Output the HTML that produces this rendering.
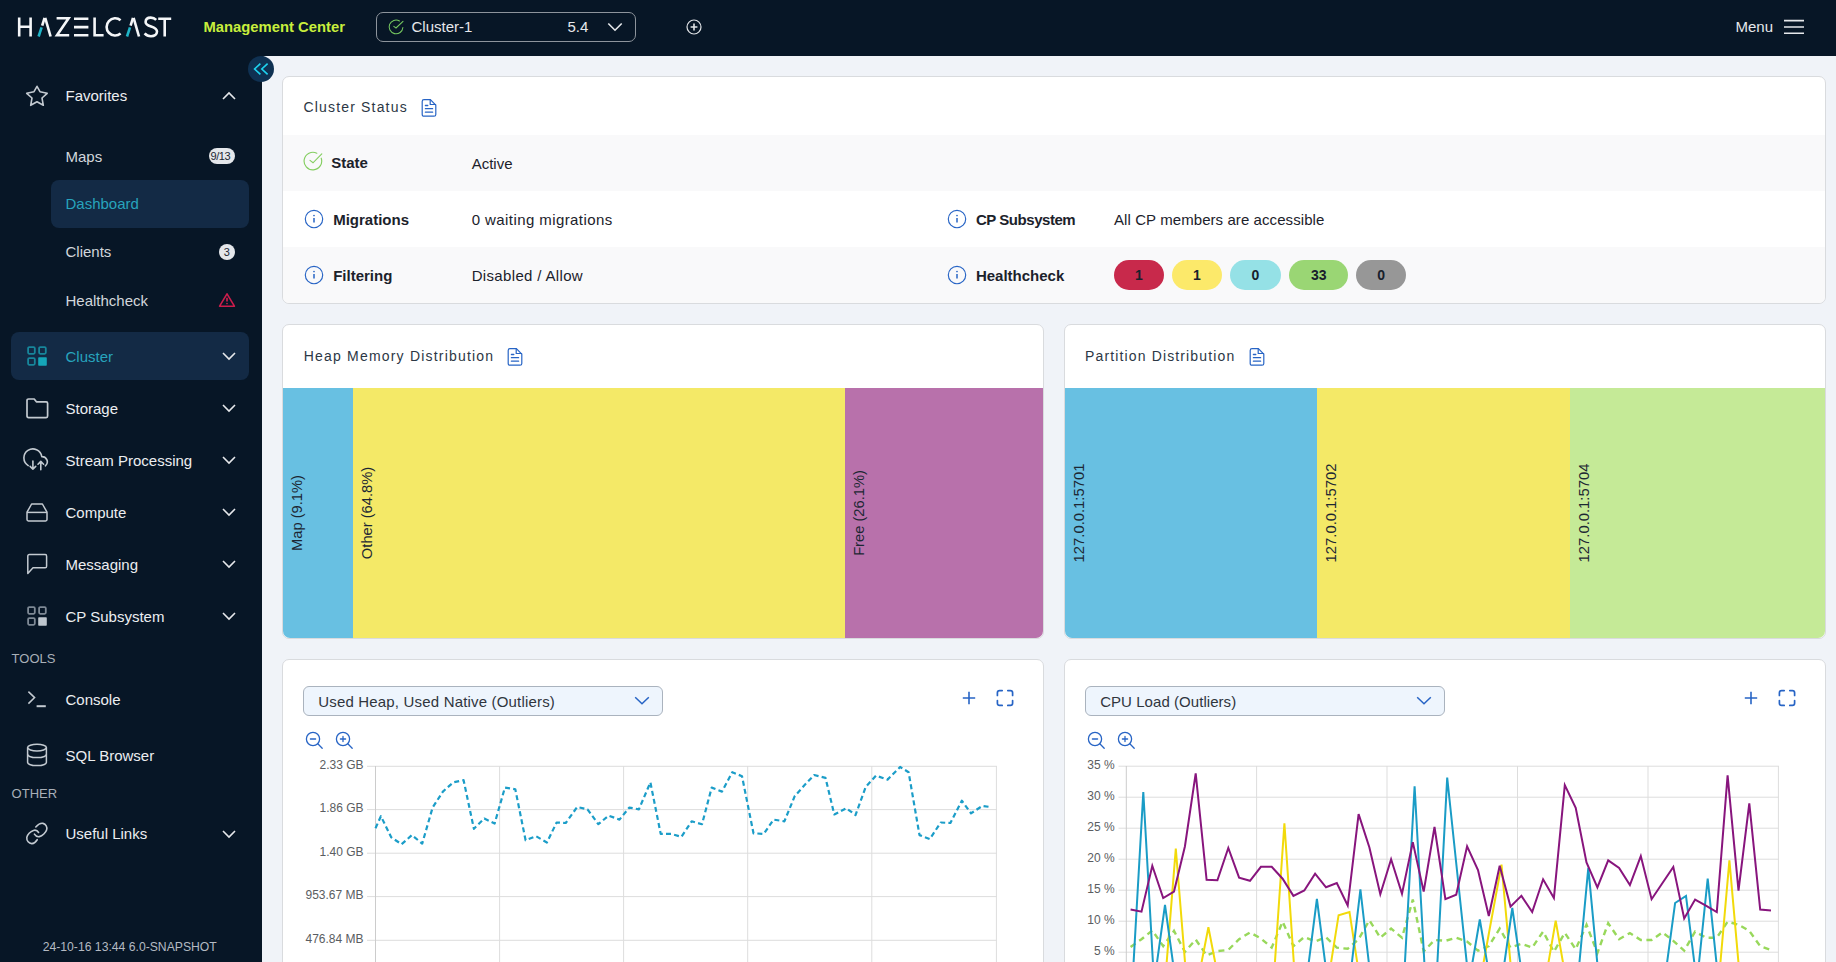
<!DOCTYPE html>
<html><head><meta charset="utf-8">
<style>
*{box-sizing:border-box;margin:0;padding:0}
html,body{width:1836px;height:962px;overflow:hidden;background:#071626;font-family:"Liberation Sans",sans-serif}
.abs{position:absolute}
#hdr{position:absolute;left:0;top:0;width:1836px;height:56px;background:#071626}
#side{position:absolute;left:0;top:56px;width:262px;height:906px;background:#071626}
#main{position:absolute;left:262px;top:56px;width:1574px;height:906px;background:#f0f3f8;border-top-left-radius:4px}
.t{position:absolute;white-space:pre;line-height:1}
.card{position:absolute;background:#fff;border:1px solid #d9dbde;border-radius:7px}
</style></head><body>
<div id="hdr"><svg class="abs" style="left:0;top:0" width="180" height="56" viewBox="0 0 180 56">
<g fill="none" stroke="#f4f6f8" stroke-width="2.6" stroke-linecap="butt">
<path d="M19.2 17.5V36.5M30.6 17.5V36.5M19.2 26.8H30.6"/>
<path d="M45.2 17.8L50.6 36.5"/>
<path d="M56.6 18.3H68.6L57 35.3H69.2"/>
<path d="M74 18.7H88.4M74 27.1H88.4M74 35.3H88.4"/>
<path d="M94.6 17.5V35.3H103.6"/>
<path d="M120.6 20.2A8.6 8.6 0 1 0 120.6 33.6"/>
<path d="M133.6 17.8L139 36.5"/>
<path d="M156.2 19.8C154.6 18.2 152.8 17.6 150.8 17.6C147.6 17.6 145.6 19.4 145.6 21.9C145.6 27.6 157 25.4 157 31.6C157 34.3 154.6 36.2 151 36.2C148.5 36.2 146.2 35.2 144.6 33.4"/>
<path d="M158.2 18.7H171.2M164.7 18.7V36.5"/>
</g>
<g stroke="#1fb5c8" stroke-width="2.6"><path d="M41.6 27.3L38.6 36.5"/><path d="M130 27.3L127 36.5"/></g>
<g stroke="#f4f6f8" stroke-width="2.6"><path d="M44.6 17.8L42.2 25.6"/><path d="M133 17.8L130.6 25.6"/></g>
</svg><div class="t" style="left:203.5px;top:20.17px;font-size:14.8px;font-weight:bold;color:#c8ee3c;">Management Center</div>
<div class="abs" style="left:376px;top:12px;width:260px;height:30px;border:1px solid #8d949c;border-radius:7px"></div><svg class="abs" style="left:386px;top:17px" width="20" height="20" viewBox="0 0 20 20"><g fill="none" stroke="#76c860" stroke-width="1.05" stroke-linecap="round"><path d="M16.9 10.5A6.9 6.9 0 1 1 13.45 3.92"/><path d="M7.8 9.4L10 11L17 4.3"/></g></svg><div class="t" style="left:411.5px;top:19.30px;font-size:15px;color:#e6e8eb;">Cluster-1</div>
<div class="t" style="left:567.5px;top:19.30px;font-size:15px;color:#e6e8eb;">5.4</div>
<svg class="abs" style="left:606px;top:20px" width="18" height="14" viewBox="0 0 18 14"><path d="M2.3 3.5L9 10.2L15.7 3.5" fill="none" stroke="#e6e8eb" stroke-width="1.6"/></svg><svg class="abs" style="left:684px;top:17px" width="20" height="20" viewBox="0 0 20 20"><g fill="none" stroke="#e0e3e6" stroke-width="1.2"><circle cx="10" cy="10" r="7"/><path d="M10 6.6V13.4M6.6 10H13.4" stroke-width="1.6"/></g></svg><div class="t" style="left:1735.5px;top:19.40px;font-size:15px;color:#e6e8eb;">Menu</div>
<svg class="abs" style="left:1782px;top:17px" width="24" height="20" viewBox="0 0 24 20"><g stroke="#e6e8eb" stroke-width="1.6"><path d="M2 3.6H22M2 10H22M2 16.2H22"/></g></svg></div><div id="side"></div><div class="abs" style="left:51px;top:180px;width:198px;height:48px;background:#132a45;border-radius:8px"></div><div class="abs" style="left:11px;top:332px;width:238px;height:48px;background:#132a45;border-radius:8px"></div><div class="t" style="left:65.5px;top:88.30px;font-size:15px;color:#eceef1;">Favorites</div>
<div class="t" style="left:65.5px;top:148.60px;font-size:15px;color:#d2d6dc;">Maps</div>
<div class="t" style="left:65.5px;top:196.30px;font-size:15px;color:#27a4bd;">Dashboard</div>
<div class="t" style="left:65.5px;top:244.40px;font-size:15px;color:#d2d6dc;">Clients</div>
<div class="t" style="left:65.5px;top:292.50px;font-size:15px;color:#d2d6dc;">Healthcheck</div>
<div class="t" style="left:65.5px;top:348.80px;font-size:15px;color:#27a4bd;">Cluster</div>
<div class="t" style="left:65.5px;top:400.60px;font-size:15px;color:#eceef1;">Storage</div>
<div class="t" style="left:65.5px;top:452.50px;font-size:15px;color:#eceef1;">Stream Processing</div>
<div class="t" style="left:65.5px;top:504.60px;font-size:15px;color:#eceef1;">Compute</div>
<div class="t" style="left:65.5px;top:556.80px;font-size:15px;color:#eceef1;">Messaging</div>
<div class="t" style="left:65.5px;top:608.80px;font-size:15px;color:#eceef1;">CP Subsystem</div>
<div class="t" style="left:11.6px;top:651.99px;font-size:13px;color:#a9b0b8;">TOOLS</div>
<div class="t" style="left:65.5px;top:691.80px;font-size:15px;color:#eceef1;">Console</div>
<div class="t" style="left:65.5px;top:747.70px;font-size:15px;color:#eceef1;">SQL Browser</div>
<div class="t" style="left:11.6px;top:786.99px;font-size:13px;color:#a9b0b8;">OTHER</div>
<div class="t" style="left:65.5px;top:826.20px;font-size:15px;color:#eceef1;">Useful Links</div>
<div class="t" style="left:42.7px;top:940.67px;font-size:12.2px;color:#b4bac2;">24-10-16 13:44 6.0-SNAPSHOT</div>
<div class="abs" style="left:209px;top:148px;width:26px;height:16px;border-radius:8px;background:#e4e7eb"></div><div class="t" style="left:210.5px;top:150.69px;font-size:11px;color:#1d2733;letter-spacing:-0.4px">9/13</div>
<div class="abs" style="left:219px;top:244px;width:16px;height:16px;border-radius:8px;background:#e4e7eb"></div><div class="t" style="left:223.7px;top:246.69px;font-size:11px;color:#1d2733;">3</div>
<svg class="abs" style="left:217px;top:290px" width="20" height="20" viewBox="0 0 20 20"><g fill="none" stroke="#cc1d4c" stroke-width="1.6" stroke-linejoin="round"><path d="M10 3.8L17.4 16.2H2.6Z"/></g><path d="M10 7.8V11.4" stroke="#cc1d4c" stroke-width="1.7"/><circle cx="10" cy="13.5" r="0.85" fill="#cc1d4c"/></svg><svg class="abs" style="left:221px;top:90px" width="16" height="12" viewBox="0 0 16 12"><path d="M2 9L8 3L14 9" fill="none" stroke="#e6e8eb" stroke-width="1.6"/></svg>
<svg class="abs" style="left:221px;top:350px" width="16" height="12" viewBox="0 0 16 12"><path d="M2 3L8 9L14 3" fill="none" stroke="#e6e8eb" stroke-width="1.6"/></svg>
<svg class="abs" style="left:221px;top:402px" width="16" height="12" viewBox="0 0 16 12"><path d="M2 3L8 9L14 3" fill="none" stroke="#e6e8eb" stroke-width="1.6"/></svg>
<svg class="abs" style="left:221px;top:454px" width="16" height="12" viewBox="0 0 16 12"><path d="M2 3L8 9L14 3" fill="none" stroke="#e6e8eb" stroke-width="1.6"/></svg>
<svg class="abs" style="left:221px;top:506px" width="16" height="12" viewBox="0 0 16 12"><path d="M2 3L8 9L14 3" fill="none" stroke="#e6e8eb" stroke-width="1.6"/></svg>
<svg class="abs" style="left:221px;top:558px" width="16" height="12" viewBox="0 0 16 12"><path d="M2 3L8 9L14 3" fill="none" stroke="#e6e8eb" stroke-width="1.6"/></svg>
<svg class="abs" style="left:221px;top:610px" width="16" height="12" viewBox="0 0 16 12"><path d="M2 3L8 9L14 3" fill="none" stroke="#e6e8eb" stroke-width="1.6"/></svg>
<svg class="abs" style="left:221px;top:828px" width="16" height="12" viewBox="0 0 16 12"><path d="M2 3L8 9L14 3" fill="none" stroke="#e6e8eb" stroke-width="1.6"/></svg>
<svg class="abs" style="left:24px;top:83px" width="26" height="26" viewBox="0 0 26 26"><path d="M13 3.3L16 8.7L23.2 10.3L18 15L19.3 22.3L13 18.7L6.7 22.3L8 15L2.7 10.3L10 8.7Z" fill="none" stroke="#c3cad1" stroke-width="1.6" stroke-linejoin="round"/></svg><svg class="abs" style="left:27px;top:346.2px" width="20" height="20" viewBox="0 0 20 20"><g fill="none" stroke="#17869b" stroke-width="1.8"><rect x="1.1" y="1.1" width="6.7" height="6.7" rx="1.2"/><rect x="12.1" y="1.1" width="6.7" height="6.7" rx="1.2"/><rect x="1.1" y="12.1" width="6.7" height="6.7" rx="1.2"/></g><rect x="11.2" y="11.2" width="8.6" height="8.6" rx="0.8" fill="#15a5b8"/></svg>
<svg class="abs" style="left:27px;top:606.2px" width="20" height="20" viewBox="0 0 20 20"><g fill="none" stroke="#7e8995" stroke-width="1.8"><rect x="1.1" y="1.1" width="6.7" height="6.7" rx="1.2"/><rect x="12.1" y="1.1" width="6.7" height="6.7" rx="1.2"/><rect x="1.1" y="12.1" width="6.7" height="6.7" rx="1.2"/></g><rect x="11.2" y="11.2" width="8.6" height="8.6" rx="0.8" fill="#bec6ce"/></svg>
<svg class="abs" style="left:24px;top:396px" width="26" height="24" viewBox="0 0 26 24"><path d="M3 4.6C3 3.5 3.5 3 4.6 3H10.2L12.4 5.8H22.2C23.2 5.8 23.6 6.3 23.6 7.2V20C23.6 21 23.2 21.6 22.2 21.6H4.6C3.5 21.6 3 21 3 20Z" fill="none" stroke="#c3cad1" stroke-width="1.7" stroke-linejoin="round"/></svg><svg class="abs" style="left:23px;top:448px" width="28" height="24" viewBox="0 0 28 24"><g fill="none" stroke="#c3cad1" stroke-width="1.6" stroke-linecap="round" stroke-linejoin="round"><path d="M5.2 17.6A9 9 0 1 1 18.8 8.6A5.2 5.2 0 0 1 22.4 17.8"/><path d="M9.9 13V21.2M7.1 18.4L9.9 21.2L12.7 18.4"/><path d="M17.8 21.7V13.4M15 16.2L17.8 13.4L20.6 16.2"/></g></svg><svg class="abs" style="left:24px;top:501px" width="26" height="22" viewBox="0 0 26 22"><g fill="none" stroke="#c3cad1" stroke-width="1.5" stroke-linejoin="round"><path d="M3 11.2L7.6 3H18.4L23 11.2V18.6C23 19.6 22.5 20 21.6 20H4.4C3.5 20 3 19.6 3 18.6Z"/><path d="M3 11.4H23"/></g></svg><svg class="abs" style="left:25px;top:552px" width="24" height="24" viewBox="0 0 24 24"><path d="M2.8 21.4V4.2C2.8 3.2 3.3 2.6 4.4 2.6H20.2C21.2 2.6 21.6 3.2 21.6 4.2V14.2C21.6 15.2 21.2 15.8 20.2 15.8H8L2.8 21.4Z" fill="none" stroke="#c3cad1" stroke-width="1.5" stroke-linejoin="round"/></svg><svg class="abs" style="left:26px;top:689px" width="22" height="20" viewBox="0 0 22 20"><g fill="none" stroke="#c3cad1" stroke-width="1.5"><path d="M2.4 2.6L8.6 8.6L2.4 14.6"/><path d="M10.6 17.2H19.8" stroke-width="2"/></g></svg><svg class="abs" style="left:25px;top:742px" width="24" height="26" viewBox="0 0 24 26"><g fill="none" stroke="#c3cad1" stroke-width="1.5"><ellipse cx="12" cy="5.6" rx="9.4" ry="3.4"/><path d="M2.6 5.6V20.2C2.6 22.2 6.8 23.6 12 23.6C17.2 23.6 21.4 22.2 21.4 20.2V5.6"/><path d="M2.6 12.2C2.6 14.2 6.8 15.6 12 15.6C17.2 15.6 21.4 14.2 21.4 12.2"/></g></svg><svg class="abs" style="left:24px;top:821px" width="26" height="26" viewBox="0 0 26 26"><g fill="none" stroke="#c3cad1" stroke-width="1.6" stroke-linecap="round"><path d="M11.8 6C13.8 3.8 16.2 1.8 19 2.4C21.8 3 23.6 6 22.6 9C21.8 11.4 18.4 15 15.4 15.6C13.4 16 11.4 14.8 10.4 13.2"/><path d="M14.6 11.5C13.6 9.8 11.6 8.8 9.4 9.4C6.4 10.4 3.2 13.6 2.8 16.4C2.4 19.8 5 22.8 8 22.6C10.2 22.4 12 20.6 13.2 18.7"/></g></svg><div id="main"></div><div class="abs" style="left:248px;top:56px;width:26px;height:26px;border-radius:13px;background:#0f3152"></div><svg class="abs" style="left:248px;top:56px" width="26" height="26" viewBox="0 0 26 26"><g fill="none" stroke="#1ed3f0" stroke-width="1.6"><path d="M12.4 7.6L6.6 13L12.4 18.4"/><path d="M19.6 7.6L13.8 13L19.6 18.4"/></g></svg><div class="card" style="left:282px;top:76px;width:1544px;height:228px"></div><div class="abs" style="left:283px;top:134.5px;width:1542px;height:56.5px;background:#f9f9fa"></div><div class="abs" style="left:283px;top:247px;width:1542px;height:56px;background:#f9f9fa;border-bottom-left-radius:7px;border-bottom-right-radius:7px"></div><div class="t" style="left:303.5px;top:100.05px;font-size:14px;color:#2c3745;letter-spacing:1.17px">Cluster Status</div>
<svg class="abs" style="left:421px;top:98px" width="17" height="20" viewBox="0 0 17 20"><g fill="none" stroke="#2764c5" stroke-width="1.2" stroke-linejoin="round" stroke-linecap="round"><path d="M3 1.6H9.4L14.8 7.2V16.4C14.8 17.6 14.2 18.2 13 18.2H3C1.8 18.2 1.2 17.6 1.2 16.4V3.4C1.2 2.2 1.8 1.6 3 1.6Z"/><path d="M9.2 1.8V6.5H14.6"/><path d="M4.4 7.5H6.8M4.4 10.7H11.6M4.4 14.2H11.6" stroke-width="1.3"/></g></svg>
<svg class="abs" style="left:303px;top:151px" width="20" height="20" viewBox="0 0 20 20"><g fill="none" stroke="#84ce60" stroke-width="1.15" stroke-linecap="round"><path d="M18.2 7.2A8.8 8.8 0 1 1 13.8 2.2"/><path d="M7 9.4L10 11.8L18.8 2.8"/></g></svg><div class="t" style="left:331.2px;top:155.30px;font-size:15px;font-weight:bold;color:#1c222b;">State</div>
<div class="t" style="left:471.7px;top:156.00px;font-size:15px;color:#1c222b;">Active</div>
<svg class="abs" style="left:304px;top:209px" width="20" height="20" viewBox="0 0 20 20"><circle cx="10" cy="10" r="8.7" fill="none" stroke="#2764c5" stroke-width="1.15"/><circle cx="10" cy="6.5" r="0.85" fill="#2764c5"/><path d="M10 8.9V13.4" stroke="#2764c5" stroke-width="1.5"/></svg>
<div class="t" style="left:333.2px;top:211.80px;font-size:15px;font-weight:bold;color:#1c222b;">Migrations</div>
<div class="t" style="left:471.7px;top:211.80px;font-size:15px;color:#1c222b;letter-spacing:0.42px">0 waiting migrations</div>
<svg class="abs" style="left:304px;top:265px" width="20" height="20" viewBox="0 0 20 20"><circle cx="10" cy="10" r="8.7" fill="none" stroke="#2764c5" stroke-width="1.15"/><circle cx="10" cy="6.5" r="0.85" fill="#2764c5"/><path d="M10 8.9V13.4" stroke="#2764c5" stroke-width="1.5"/></svg>
<div class="t" style="left:333.2px;top:267.80px;font-size:15px;font-weight:bold;color:#1c222b;">Filtering</div>
<div class="t" style="left:471.7px;top:267.80px;font-size:15px;color:#1c222b;letter-spacing:0.34px">Disabled / Allow</div>
<svg class="abs" style="left:947px;top:209px" width="20" height="20" viewBox="0 0 20 20"><circle cx="10" cy="10" r="8.7" fill="none" stroke="#2764c5" stroke-width="1.15"/><circle cx="10" cy="6.5" r="0.85" fill="#2764c5"/><path d="M10 8.9V13.4" stroke="#2764c5" stroke-width="1.5"/></svg>
<div class="t" style="left:975.9px;top:211.80px;font-size:15px;font-weight:bold;color:#1c222b;letter-spacing:-0.45px">CP Subsystem</div>
<div class="t" style="left:1114px;top:211.80px;font-size:15px;color:#1c222b;letter-spacing:0.08px">All CP members are accessible</div>
<svg class="abs" style="left:947px;top:265px" width="20" height="20" viewBox="0 0 20 20"><circle cx="10" cy="10" r="8.7" fill="none" stroke="#2764c5" stroke-width="1.15"/><circle cx="10" cy="6.5" r="0.85" fill="#2764c5"/><path d="M10 8.9V13.4" stroke="#2764c5" stroke-width="1.5"/></svg>
<div class="t" style="left:975.9px;top:267.80px;font-size:15px;font-weight:bold;color:#1c222b;">Healthcheck</div>
<div class="abs" style="left:1114px;top:260px;width:50px;height:30px;border-radius:15px;background:#c8294b;color:#18202b;font-size:14px;font-weight:bold;text-align:center;line-height:30px">1</div><div class="abs" style="left:1172px;top:260px;width:50px;height:30px;border-radius:15px;background:#fce96a;color:#18202b;font-size:14px;font-weight:bold;text-align:center;line-height:30px">1</div><div class="abs" style="left:1230px;top:260px;width:51px;height:30px;border-radius:15px;background:#95e1e6;color:#18202b;font-size:14px;font-weight:bold;text-align:center;line-height:30px">0</div><div class="abs" style="left:1289px;top:260px;width:59.4px;height:30px;border-radius:15px;background:#9ad674;color:#18202b;font-size:14px;font-weight:bold;text-align:center;line-height:30px">33</div><div class="abs" style="left:1356.2px;top:260px;width:50px;height:30px;border-radius:15px;background:#979797;color:#18202b;font-size:14px;font-weight:bold;text-align:center;line-height:30px">0</div><div class="card" style="left:282px;top:324px;width:762px;height:315px"></div><div class="t" style="left:303.7px;top:349.05px;font-size:14px;color:#2c3745;letter-spacing:1.2px">Heap Memory Distribution</div>
<svg class="abs" style="left:507.4px;top:346.6px" width="17" height="20" viewBox="0 0 17 20"><g fill="none" stroke="#2764c5" stroke-width="1.2" stroke-linejoin="round" stroke-linecap="round"><path d="M3 1.6H9.4L14.8 7.2V16.4C14.8 17.6 14.2 18.2 13 18.2H3C1.8 18.2 1.2 17.6 1.2 16.4V3.4C1.2 2.2 1.8 1.6 3 1.6Z"/><path d="M9.2 1.8V6.5H14.6"/><path d="M4.4 7.5H6.8M4.4 10.7H11.6M4.4 14.2H11.6" stroke-width="1.3"/></g></svg>
<div class="abs" style="left:283px;top:388px;width:70px;height:250px;background:#68c0e2;border-bottom-left-radius:7px;"></div>
<div class="abs" style="left:353px;top:388px;width:492px;height:250px;background:#f4e967;"></div>
<div class="abs" style="left:845px;top:388px;width:198px;height:250px;background:#b871ab;border-bottom-right-radius:7px;"></div>
<div class="t" style="left:289.85px;top:638.00px;width:250px;text-align:center;font-size:14.7px;color:#1c2733;transform-origin:0 0;transform:rotate(-90deg)">Map (9.1%)</div>
<div class="t" style="left:359.85px;top:638.00px;width:250px;text-align:center;font-size:14.7px;color:#1c2733;transform-origin:0 0;transform:rotate(-90deg)">Other (64.8%)</div>
<div class="t" style="left:851.85px;top:638.00px;width:250px;text-align:center;font-size:14.7px;color:#1c2733;transform-origin:0 0;transform:rotate(-90deg)">Free (26.1%)</div>
<div class="card" style="left:1064px;top:324px;width:762px;height:315px"></div><div class="t" style="left:1085px;top:349.05px;font-size:14px;color:#2c3745;letter-spacing:1.14px">Partition Distribution</div>
<svg class="abs" style="left:1249px;top:347px" width="17" height="20" viewBox="0 0 17 20"><g fill="none" stroke="#2764c5" stroke-width="1.2" stroke-linejoin="round" stroke-linecap="round"><path d="M3 1.6H9.4L14.8 7.2V16.4C14.8 17.6 14.2 18.2 13 18.2H3C1.8 18.2 1.2 17.6 1.2 16.4V3.4C1.2 2.2 1.8 1.6 3 1.6Z"/><path d="M9.2 1.8V6.5H14.6"/><path d="M4.4 7.5H6.8M4.4 10.7H11.6M4.4 14.2H11.6" stroke-width="1.3"/></g></svg>
<div class="abs" style="left:1065px;top:388px;width:252px;height:250px;background:#68c0e2;border-bottom-left-radius:7px;"></div>
<div class="abs" style="left:1317px;top:388px;width:253px;height:250px;background:#f4e967;"></div>
<div class="abs" style="left:1570px;top:388px;width:255px;height:250px;background:#c5ea97;border-bottom-right-radius:7px;"></div>
<div class="t" style="left:1071.77px;top:638.00px;width:250px;text-align:center;font-size:14.8px;color:#1c2733;transform-origin:0 0;transform:rotate(-90deg)">127.0.0.1:5701</div>
<div class="t" style="left:1323.77px;top:638.00px;width:250px;text-align:center;font-size:14.8px;color:#1c2733;transform-origin:0 0;transform:rotate(-90deg)">127.0.0.1:5702</div>
<div class="t" style="left:1576.77px;top:638.00px;width:250px;text-align:center;font-size:14.8px;color:#1c2733;transform-origin:0 0;transform:rotate(-90deg)">127.0.0.1:5704</div>
<div class="card" style="left:282px;top:659px;width:762px;height:340px"></div>
<div class="card" style="left:1064px;top:659px;width:762px;height:340px"></div>
<div class="abs" style="left:303px;top:686px;width:360px;height:30px;border:1px solid #aab3be;border-radius:6px;background:#eef5fd"></div>
<div class="t" style="left:318.2px;top:693.50px;font-size:15px;color:#30353d;letter-spacing:0.18px">Used Heap, Used Native (Outliers)</div>
<svg class="abs" style="left:633px;top:692px" width="18" height="18" viewBox="0 0 18 18"><path d="M2.2 5.2L9 11.8L15.8 5.2" fill="none" stroke="#2764c5" stroke-width="1.5"/></svg>
<div class="abs" style="left:1085px;top:686px;width:360px;height:30px;border:1px solid #aab3be;border-radius:6px;background:#eef5fd"></div>
<div class="t" style="left:1100.2px;top:693.50px;font-size:15px;color:#30353d;letter-spacing:0.05px">CPU Load (Outliers)</div>
<svg class="abs" style="left:1415px;top:692px" width="18" height="18" viewBox="0 0 18 18"><path d="M2.2 5.2L9 11.8L15.8 5.2" fill="none" stroke="#2764c5" stroke-width="1.5"/></svg>
<svg class="abs" style="left:961px;top:690px" width="16" height="16" viewBox="0 0 16 16"><path d="M8 1.8V14.2M1.8 8H14.2" stroke="#2764c5" stroke-width="1.6"/></svg>
<svg class="abs" style="left:995.5px;top:689px" width="18" height="18" viewBox="0 0 18 18"><g fill="none" stroke="#2764c5" stroke-width="1.7" stroke-linecap="round"><path d="M1.4 6.4V3.8C1.4 2.4 2.2 1.6 3.6 1.6H6.2"/><path d="M11.8 1.6H14.4C15.8 1.6 16.6 2.4 16.6 3.8V6.4"/><path d="M16.6 11.6V14.2C16.6 15.6 15.8 16.4 14.4 16.4H11.8"/><path d="M6.2 16.4H3.6C2.2 16.4 1.4 15.6 1.4 14.2V11.6"/></g></svg>
<svg class="abs" style="left:304.5px;top:731px" width="20" height="20" viewBox="0 0 20 20"><g fill="none" stroke="#2764c5" stroke-width="1.3" stroke-linecap="round"><circle cx="8" cy="8" r="6.6"/><path d="M12.8 12.8L17.2 17.2"/><path d="M5.4 8H10.6" /></g></svg>
<svg class="abs" style="left:334.5px;top:731px" width="20" height="20" viewBox="0 0 20 20"><g fill="none" stroke="#2764c5" stroke-width="1.3" stroke-linecap="round"><circle cx="8" cy="8" r="6.6"/><path d="M12.8 12.8L17.2 17.2"/><path d="M5.4 8H10.6M8 5.4V10.6"/></g></svg>
<svg class="abs" style="left:1743px;top:690px" width="16" height="16" viewBox="0 0 16 16"><path d="M8 1.8V14.2M1.8 8H14.2" stroke="#2764c5" stroke-width="1.6"/></svg>
<svg class="abs" style="left:1777.5px;top:689px" width="18" height="18" viewBox="0 0 18 18"><g fill="none" stroke="#2764c5" stroke-width="1.7" stroke-linecap="round"><path d="M1.4 6.4V3.8C1.4 2.4 2.2 1.6 3.6 1.6H6.2"/><path d="M11.8 1.6H14.4C15.8 1.6 16.6 2.4 16.6 3.8V6.4"/><path d="M16.6 11.6V14.2C16.6 15.6 15.8 16.4 14.4 16.4H11.8"/><path d="M6.2 16.4H3.6C2.2 16.4 1.4 15.6 1.4 14.2V11.6"/></g></svg>
<svg class="abs" style="left:1086.5px;top:731px" width="20" height="20" viewBox="0 0 20 20"><g fill="none" stroke="#2764c5" stroke-width="1.3" stroke-linecap="round"><circle cx="8" cy="8" r="6.6"/><path d="M12.8 12.8L17.2 17.2"/><path d="M5.4 8H10.6" /></g></svg>
<svg class="abs" style="left:1116.5px;top:731px" width="20" height="20" viewBox="0 0 20 20"><g fill="none" stroke="#2764c5" stroke-width="1.3" stroke-linecap="round"><circle cx="8" cy="8" r="6.6"/><path d="M12.8 12.8L17.2 17.2"/><path d="M5.4 8H10.6M8 5.4V10.6"/></g></svg>
<svg class="abs" style="left:0;top:0" width="1836" height="962" viewBox="0 0 1836 962"><g stroke="#dddddd" stroke-width="1" fill="none"><path d="M367 766.3H996.9"/><path d="M367 809.6H996.9"/><path d="M367 853.2H996.9"/><path d="M367 896.6H996.9"/><path d="M367 940.3H996.9"/><path d="M499.6 766V962"/><path d="M623.6 766V962"/><path d="M747.7 766V962"/><path d="M871.8 766V962"/><path d="M996.4 766V962"/><path d="M375.5 766V962" stroke="#cccccc"/><path d="M1118.5 766.2H1778.9"/><path d="M1118.5 797.2H1778.9"/><path d="M1118.5 828.2H1778.9"/><path d="M1118.5 859.2H1778.9"/><path d="M1118.5 890.2H1778.9"/><path d="M1118.5 921.2H1778.9"/><path d="M1118.5 952.2H1778.9"/><path d="M1256.6 766V962"/><path d="M1387.0 766V962"/><path d="M1517.5 766V962"/><path d="M1648.0 766V962"/><path d="M1778.4 766V962"/><path d="M1126.3 766V962" stroke="#cccccc"/></g><path d="M375.5 828.2 L380.9 816.2 L391.2 837.3 L401.6 844.2 L411.9 835.1 L422.2 843.6 L432.6 807.6 L442.9 791.6 L453.2 782.4 L463.6 780.2 L473.9 828.8 L484.3 818.5 L494.6 823.6 L504.9 787.6 L515.3 789.3 L525.6 840.2 L536.0 836.2 L546.9 842.5 L556.6 822.5 L565.7 823.0 L577.2 807.0 L587.5 809.3 L598.3 824.2 L608.6 815.6 L619.5 819.6 L629.2 807.6 L638.9 809.3 L650.4 782.4 L660.7 833.9 L671.0 833.9 L681.4 836.8 L691.7 821.3 L702.0 824.2 L711.7 787.6 L722.0 791.6 L732.3 772.2 L742.0 776.2 L753.5 833.3 L763.8 833.9 L773.5 819.6 L784.4 821.3 L794.7 796.2 L804.4 785.3 L814.1 775.0 L825.5 777.9 L834.3 814.5 L846.3 808.2 L855.5 815.0 L865.7 787.0 L876.0 775.6 L887.5 779.6 L900.1 767.0 L908.6 772.2 L919.5 835.1 L929.8 839.1 L940.7 822.5 L950.4 823.0 L961.8 800.7 L971.0 813.3 L982.4 805.9 L990.4 807.0" fill="none" stroke="#1b9dc8" stroke-width="2.2" stroke-dasharray="5 3.2" stroke-linejoin="round"/><path d="M1130.6 946.9 L1141.5 939.2 L1152.3 930.5 L1163.2 946.1 L1174.0 930.9 L1184.9 951.8 L1195.7 939.6 L1206.6 955.3 L1217.4 951.1 L1228.3 949.9 L1239.1 939.2 L1250.0 932.4 L1260.9 938.5 L1271.7 947.6 L1282.6 921.7 L1293.4 946.1 L1304.3 937.0 L1315.1 941.5 L1326.0 937.3 L1336.8 947.6 L1347.7 948.8 L1358.6 939.2 L1369.4 920.2 L1380.3 937.7 L1391.1 928.6 L1402.0 937.7 L1412.8 899.6 L1423.7 951.4 L1434.5 940.0 L1445.4 940.8 L1456.2 937.7 L1467.1 941.5 L1478.0 950.7 L1488.8 946.1 L1499.7 928.6 L1510.5 947.6 L1521.4 943.8 L1532.2 947.6 L1543.1 931.6 L1553.9 951.8 L1564.8 932.8 L1575.7 949.2 L1586.5 924.7 L1597.4 953.0 L1608.2 923.2 L1619.1 939.2 L1629.9 933.1 L1640.8 940.0 L1651.6 940.0 L1662.5 932.4 L1673.3 940.8 L1684.2 950.7 L1695.1 931.6 L1705.9 937.7 L1716.8 937.7 L1727.6 921.7 L1738.5 924.7 L1749.3 930.9 L1760.2 946.1 L1771.0 949.9" fill="none" stroke="#98d85b" stroke-width="2.4" stroke-dasharray="6 4.5"/><path d="M1132.4 983.2 L1143.3 983.2 L1154.1 983.2 L1165.0 983.2 L1175.8 848.6 L1186.7 983.2 L1197.5 983.2 L1208.4 927.2 L1219.2 983.2 L1230.1 983.2 L1240.9 983.2 L1251.8 983.2 L1262.7 983.2 L1273.5 983.2 L1284.4 823.4 L1295.2 983.2 L1306.1 983.2 L1316.9 983.2 L1327.8 983.2 L1338.6 915.2 L1349.5 912.0 L1360.4 983.2 L1371.2 983.2 L1382.1 983.2 L1392.9 983.2 L1403.8 983.2 L1414.6 983.2 L1425.5 983.2 L1436.3 983.2 L1447.2 983.2 L1458.0 983.2 L1468.9 983.2 L1479.8 983.2 L1490.6 924.0 L1501.5 864.7 L1512.3 983.2 L1523.2 983.2 L1534.0 983.2 L1544.9 983.2 L1555.7 920.6 L1566.6 983.2 L1577.5 983.2 L1588.3 983.2 L1599.2 983.2 L1610.0 983.2 L1620.9 983.2 L1631.7 983.2 L1642.6 983.2 L1653.4 983.2 L1664.3 983.2 L1675.1 983.2 L1686.0 983.2 L1696.9 983.2 L1707.7 983.2 L1718.6 983.2 L1729.4 860.4 L1740.3 983.2 L1751.1 983.2 L1762.0 983.2 L1772.8 983.2" fill="none" stroke="#f2da0a" stroke-width="2" stroke-linejoin="miter"/><path d="M1132.4 983.2 L1143.3 792.0 L1154.1 983.2 L1165.0 905.0 L1175.8 983.2 L1186.7 983.2 L1197.5 983.2 L1208.4 983.2 L1219.2 983.2 L1230.1 983.2 L1240.9 983.2 L1251.8 983.2 L1262.7 983.2 L1273.5 983.2 L1284.4 983.2 L1295.2 983.2 L1306.1 983.2 L1316.9 899.0 L1327.8 983.2 L1338.6 983.2 L1349.5 983.2 L1360.4 889.4 L1371.2 983.2 L1382.1 983.2 L1392.9 983.2 L1403.8 983.2 L1414.6 786.2 L1425.5 983.2 L1436.3 983.2 L1447.2 777.6 L1458.0 880.0 L1468.9 983.2 L1479.8 919.5 L1490.6 983.2 L1501.5 983.2 L1512.3 908.0 L1523.2 983.2 L1534.0 983.2 L1544.9 983.2 L1555.7 983.2 L1566.6 983.2 L1577.5 983.2 L1588.3 867.9 L1599.2 983.2 L1610.0 983.2 L1620.9 983.2 L1631.7 983.2 L1642.6 983.2 L1653.4 983.2 L1664.3 983.2 L1675.1 903.0 L1686.0 896.0 L1696.9 983.2 L1707.7 878.7 L1718.6 983.2 L1729.4 983.2 L1740.3 983.2 L1751.1 983.2 L1762.0 983.2 L1772.8 983.2" fill="none" stroke="#1a9cc6" stroke-width="2" stroke-linejoin="miter"/><path d="M1130.6 909.5 L1141.5 911.7 L1152.3 865.8 L1163.2 898.1 L1174.0 891.6 L1184.9 846.5 L1195.7 773.3 L1206.6 879.8 L1217.4 880.2 L1228.3 848.0 L1239.1 877.7 L1250.0 880.8 L1260.9 866.8 L1271.7 866.8 L1282.6 878.7 L1293.4 895.9 L1304.3 890.5 L1315.1 873.7 L1326.0 887.3 L1336.8 883.0 L1347.7 905.5 L1358.6 814.1 L1369.4 847.5 L1380.3 894.2 L1391.1 859.3 L1402.0 893.7 L1412.8 842.1 L1423.7 891.6 L1434.5 827.0 L1445.4 899.1 L1456.2 894.8 L1467.1 846.4 L1478.0 870.0 L1488.8 916.0 L1499.7 865.8 L1510.5 906.6 L1521.4 895.9 L1532.2 912.0 L1543.1 879.3 L1553.9 898.0 L1564.8 785.1 L1575.7 807.7 L1586.5 862.5 L1597.4 887.3 L1608.2 860.4 L1619.1 867.9 L1629.9 885.1 L1640.8 856.1 L1651.6 899.2 L1662.5 883.0 L1673.3 866.9 L1684.2 918.5 L1695.1 899.6 L1705.9 905.6 L1716.8 912.1 L1727.6 775.4 L1738.5 890.6 L1749.3 803.4 L1760.2 909.5 L1771.0 910.4" fill="none" stroke="#88157d" stroke-width="2" stroke-linejoin="miter"/></svg><div class="t" style="left:243.5px;width:120px;text-align:right;top:758.84px;font-size:12px;color:#5a5d61">2.33 GB</div>
<div class="t" style="left:243.5px;width:120px;text-align:right;top:802.14px;font-size:12px;color:#5a5d61">1.86 GB</div>
<div class="t" style="left:243.5px;width:120px;text-align:right;top:845.74px;font-size:12px;color:#5a5d61">1.40 GB</div>
<div class="t" style="left:243.5px;width:120px;text-align:right;top:889.14px;font-size:12px;color:#5a5d61">953.67 MB</div>
<div class="t" style="left:243.5px;width:120px;text-align:right;top:932.84px;font-size:12px;color:#5a5d61">476.84 MB</div>
<div class="t" style="left:994.5999999999999px;width:120px;text-align:right;top:758.74px;font-size:12px;color:#5a5d61">35 %</div>
<div class="t" style="left:994.5999999999999px;width:120px;text-align:right;top:789.74px;font-size:12px;color:#5a5d61">30 %</div>
<div class="t" style="left:994.5999999999999px;width:120px;text-align:right;top:820.74px;font-size:12px;color:#5a5d61">25 %</div>
<div class="t" style="left:994.5999999999999px;width:120px;text-align:right;top:851.74px;font-size:12px;color:#5a5d61">20 %</div>
<div class="t" style="left:994.5999999999999px;width:120px;text-align:right;top:882.74px;font-size:12px;color:#5a5d61">15 %</div>
<div class="t" style="left:994.5999999999999px;width:120px;text-align:right;top:913.74px;font-size:12px;color:#5a5d61">10 %</div>
<div class="t" style="left:994.5999999999999px;width:120px;text-align:right;top:944.74px;font-size:12px;color:#5a5d61">5 %</div>
</body></html>
